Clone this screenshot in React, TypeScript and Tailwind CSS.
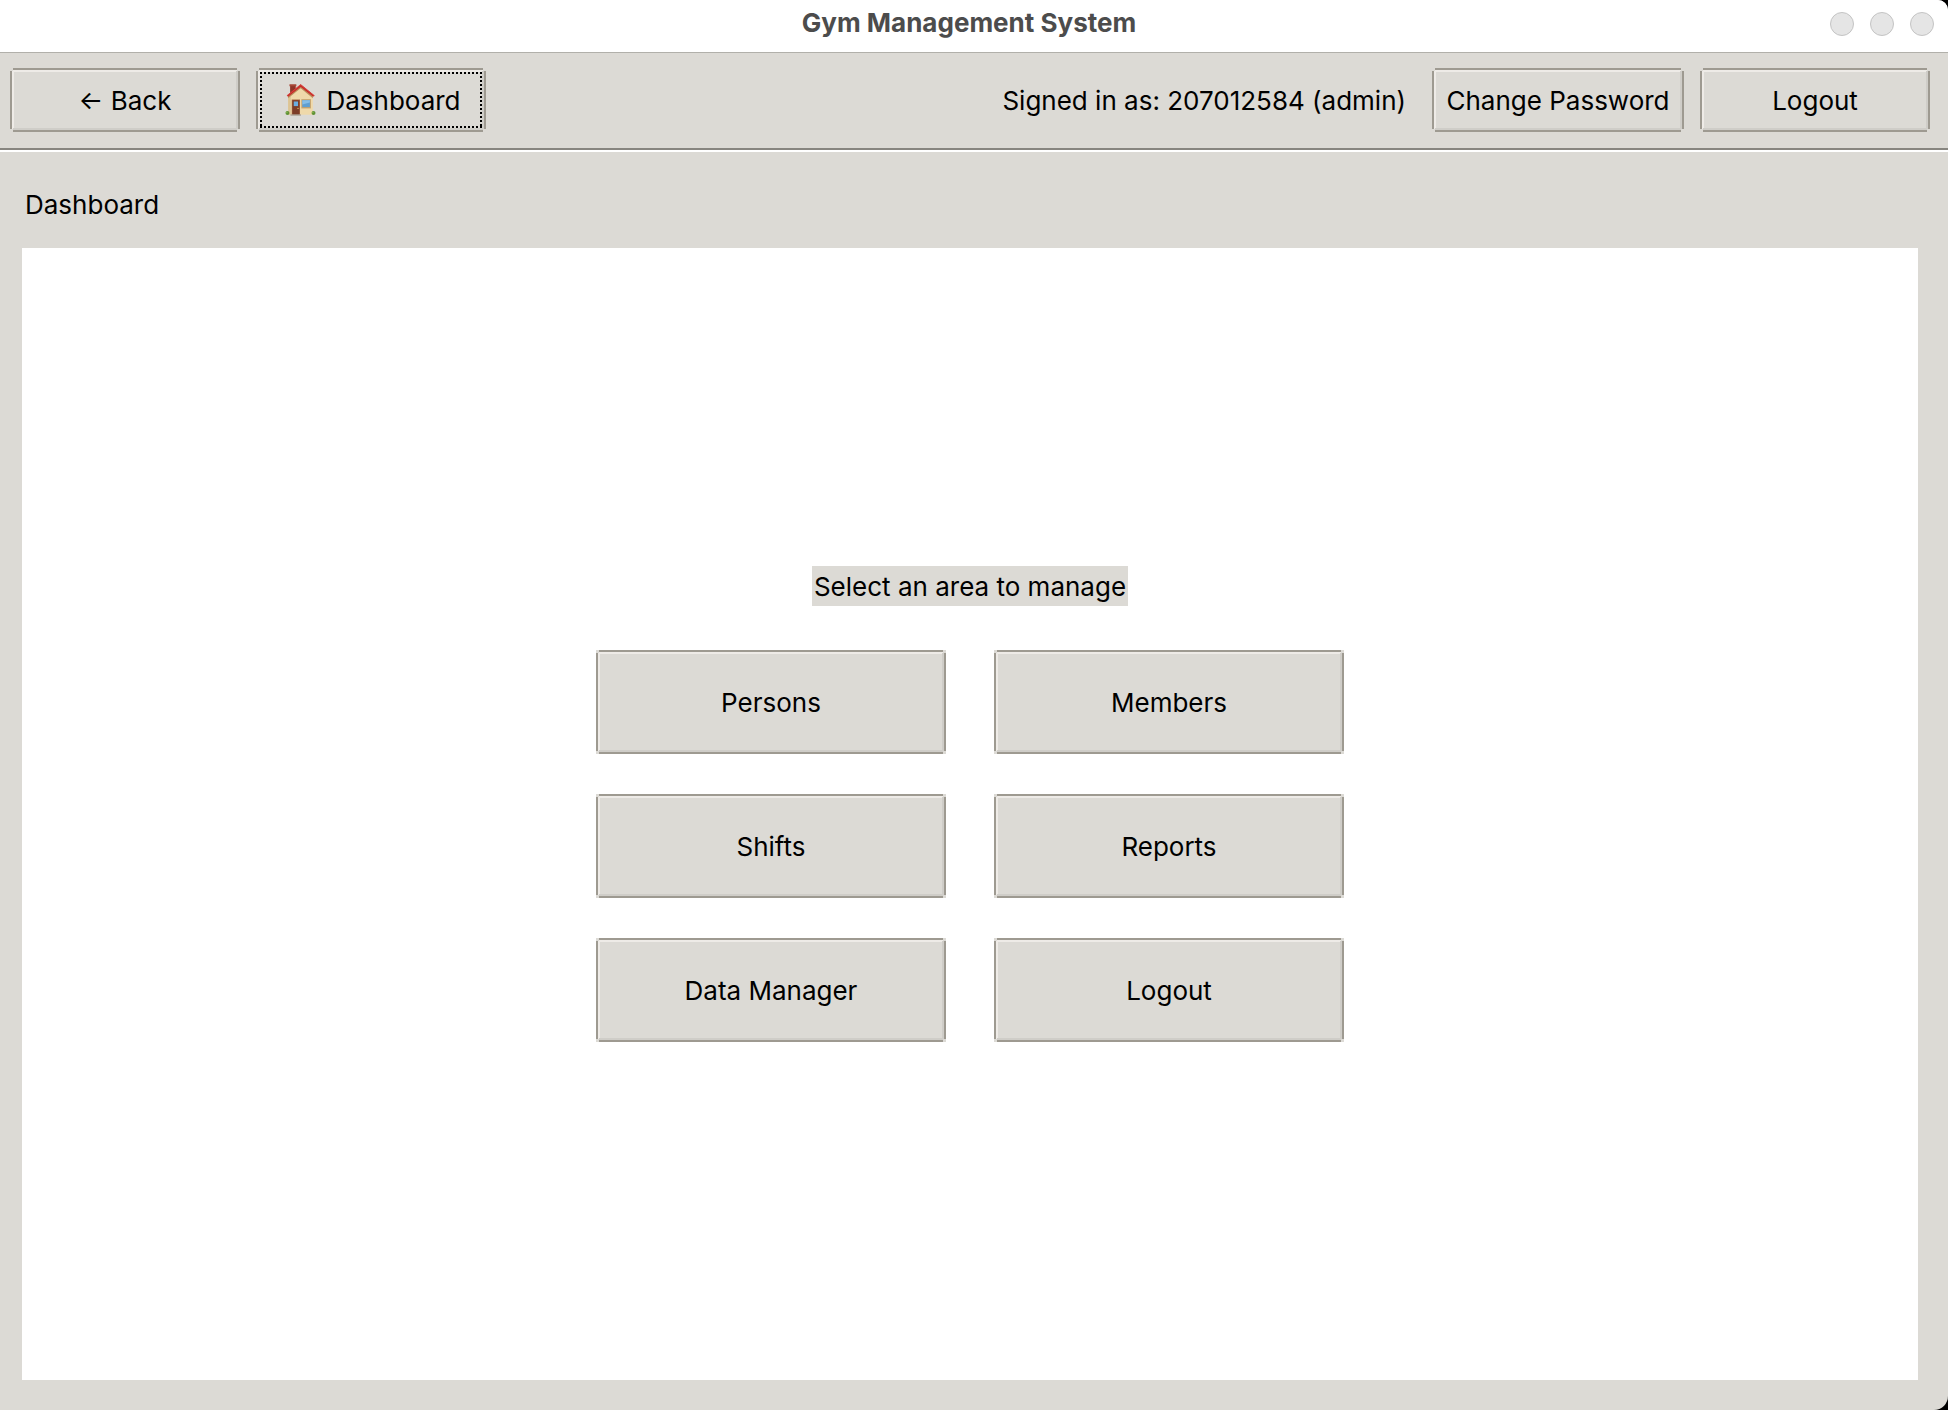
import type { ButtonHTMLAttributes, ReactNode } from "react";

/* Raised bevel: a dark outline broken at the corners, a light edge at the top left, a shade at the bottom right. */
const bevel =
  "bg-[#dcdad5] bg-no-repeat " +
  "[background-image:linear-gradient(#9e9a91,#9e9a91),linear-gradient(#9e9a91,#9e9a91),linear-gradient(#9e9a91,#9e9a91),linear-gradient(#9e9a91,#9e9a91),linear-gradient(#cfcdc8,#cfcdc8),linear-gradient(#cfcdc8,#cfcdc8),linear-gradient(#eeebe7,#eeebe7),linear-gradient(#eeebe7,#eeebe7)] " +
  "[background-size:calc(100%_-_6px)_2px,calc(100%_-_6px)_2px,2px_calc(100%_-_6px),2px_calc(100%_-_6px),calc(100%_-_6px)_2px,2px_calc(100%_-_6px),calc(100%_-_6px)_2px,2px_calc(100%_-_6px)] " +
  "[background-position:3px_0,3px_100%,0_3px,100%_3px,3px_calc(100%_-_2px),calc(100%_-_2px)_3px,3px_2px,2px_3px]";

const focusDots =
  "pointer-events-none absolute inset-1 " +
  "[background-image:repeating-linear-gradient(90deg,#000_0_2px,#dcdad5_2px_4px),repeating-linear-gradient(90deg,#000_0_2px,#dcdad5_2px_4px),repeating-linear-gradient(180deg,#000_0_2px,#dcdad5_2px_4px),repeating-linear-gradient(180deg,#000_0_2px,#dcdad5_2px_4px)] " +
  "[background-size:100%_2px,100%_2px,2px_100%,2px_100%] [background-position:0_0,0_100%,0_0,100%_0] bg-no-repeat";

type BevelButtonProps = ButtonHTMLAttributes<HTMLButtonElement> & {
  children: ReactNode;
  focused?: boolean;
};

function BevelButton({ children, focused = false, className = "", ...rest }: BevelButtonProps) {
  return (
    <button
      type="button"
      className={`relative flex items-center justify-center pt-0.5 whitespace-nowrap outline-none ${bevel} ${className}`}
      {...rest}
    >
      {children}
      {focused && <span className={focusDots} />}
    </button>
  );
}

function HouseIcon() {
  return (
    <svg viewBox="0 0 93 97" className="mb-0.5 h-8 w-[31px]" aria-hidden="true">
      <rect x="15" y="4" width="17" height="30" fill="#8e3528" />
      <rect x="13" y="1" width="21" height="6" rx="1" fill="#a64535" />
      <path d="M9 36 L47 6 L84 36 V93 H9 Z" fill="#efd9aa" />
      <path d="M9 36 H17 V93 H9 Z" fill="#dcc494" />
      <path d="M9 43 L47 13 L84 43 V37 L47 8 L9 37 Z" fill="#b98f5c" />
      <path d="M47 1 L89 35 L85 39 L47 9 L9 39 L5 35 Z" fill="#c22c28" />
      <path d="M47 1 L89 35 L88 37 L47 4 L6 37 L5 35 Z" fill="#d9453e" />
      <rect x="20" y="47" width="25" height="46" fill="#a5643f" />
      <rect x="22" y="49" width="21" height="44" fill="#7c3d27" />
      <rect x="26" y="53" width="13" height="14" fill="#6aaee0" />
      <circle cx="39" cy="74" r="2" fill="#e9c35a" />
      <rect x="49" y="46" width="29" height="28" fill="#c4a26c" />
      <rect x="52" y="49" width="23" height="21" fill="#5e9fd2" />
      <path d="M52 49 H75 V56 L52 62 Z" fill="#85bde6" />
      <rect x="16" y="92" width="32" height="4" fill="#a79d91" />
      <circle cx="7" cy="88" r="6" fill="#5f9134" />
      <circle cx="86" cy="88" r="6" fill="#5f9134" />
      <circle cx="5" cy="86" r="3" fill="#7fae49" />
      <circle cx="84" cy="86" r="3" fill="#7fae49" />
    </svg>
  );
}

const areas = ["Persons", "Members", "Shifts", "Reports", "Data Manager", "Logout"];
const windowControls = ["Minimize", "Zoom", "Close"];

export default function App() {
  return (
    <div className="min-h-screen bg-black">
      <div className="flex min-h-screen flex-col overflow-hidden rounded-tr-[10px] rounded-br-[14px] bg-[#dcdad5] font-['Inter',sans-serif] text-[26px] leading-8 text-black">
        <header className="relative flex h-[53px] items-center justify-center border-b border-[#b1b0aa] bg-white">
          <h1 className="mb-1.5 pr-2.5 font-bold text-[#4c4c4c]">Gym Management System</h1>
          <div className="absolute top-3 right-3.5 flex gap-4">
            {windowControls.map((name) => (
              <button
                key={name}
                type="button"
                aria-label={name}
                className="size-6 rounded-full border border-[#c4c4c4] bg-[#e5e5e5]"
              />
            ))}
          </div>
        </header>

        <nav className="flex items-center gap-4 border-b-2 border-[#87857f] pt-[15px] pr-[18px] pb-4 pl-2.5">
          <BevelButton className="h-16 w-[230px]">← Back</BevelButton>
          <BevelButton className="h-16 w-[230px] gap-2.5 pl-1" focused>
            <HouseIcon />
            Dashboard
          </BevelButton>
          <p className="mr-2.5 ml-auto pt-0.5">Signed in as: 207012584 (admin)</p>
          <BevelButton className="h-16 w-[252px]">Change Password</BevelButton>
          <BevelButton className="h-16 w-[230px]">Logout</BevelButton>
        </nav>

        <div className="flex h-[98px] items-center border-t-2 border-white pt-2.5 pl-[25px]">
          <h2>Dashboard</h2>
        </div>

        <main className="mr-[30px] mb-[30px] ml-[22px] flex flex-1 flex-col items-center justify-center bg-white pb-5">
          <p className="bg-[#dcdad5] px-0.5 pt-[5px] pb-[3px]">Select an area to manage</p>
          <div className="mt-11 grid grid-cols-2 gap-x-12 gap-y-10">
            {areas.map((area) => (
              <BevelButton key={area} className="h-[104px] w-[350px]">
                {area}
              </BevelButton>
            ))}
          </div>
        </main>
      </div>
    </div>
  );
}
